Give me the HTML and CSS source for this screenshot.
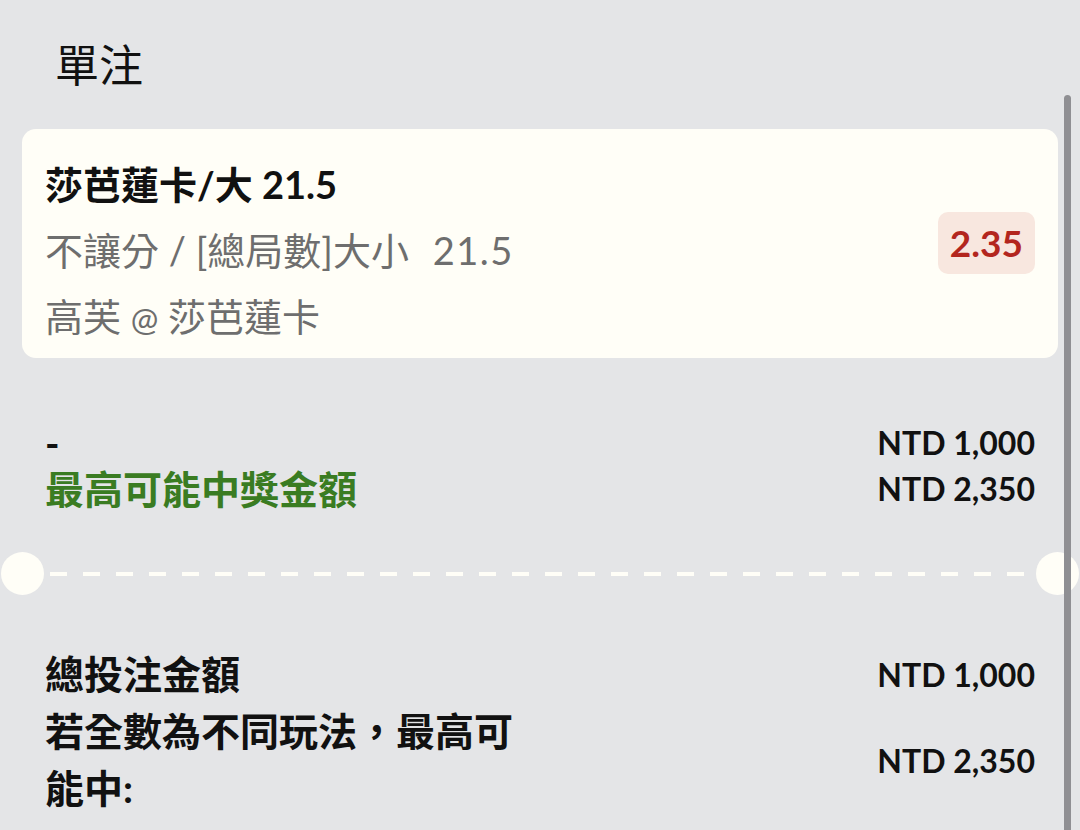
FILE: index.html
```html
<!DOCTYPE html>
<html lang="zh-Hant">
<head>
<meta charset="utf-8">
<title>單注</title>
<link rel="stylesheet" href="styles.css">
</head>
<body>
<div class="page">
  <h1 class="title">單注</h1>

  <div class="bet-card">
    <div class="bet-info">
      <div class="sel">莎芭蓮卡/大 21.5</div>
      <div class="market">不讓分 / [總局數]大小 <span class="line-val">21.5</span></div>
      <div class="match">高芙 <span class="at">@</span> 莎芭蓮卡</div>
    </div>
    <div class="odds">2.35</div>
  </div>

  <div class="stake">
    <div class="row"><span class="label">-</span><span class="amt">NTD 1,000</span></div>
    <div class="row"><span class="label green">最高可能中獎金額</span><span class="amt">NTD 2,350</span></div>
  </div>

  <div class="sep"><span class="notch left"></span><span class="dash"></span><span class="notch right"></span></div>

  <div class="totals">
    <div class="row"><span class="label">總投注金額</span><span class="amt">NTD 1,000</span></div>
    <div class="row"><span class="label wrap">若全數為不同玩法，最高可能中:</span><span class="amt">NTD 2,350</span></div>
  </div>
</div>
<div class="scrollbar"></div>
</body>
</html>
```

FILE: styles.css
```css
html, body {
  margin: 0;
  padding: 0;
  background: #e4e5e7;
  height: 100%;
  overflow: hidden;
}

body {
  font-family: "Lato", "Noto Sans CJK TC", sans-serif;
  color: #111;
}

.page {
  padding: 0 22px;
}

.title {
  margin: 0;
  padding: 33px 0 0 33px;
  font-size: 44px;
  line-height: 60px;
  font-weight: 400;
  font-family: "Noto Sans CJK TC", sans-serif;
  color: #111;
}

.bet-card {
  margin-top: 36px;
  background: #fffef7;
  border-radius: 14px;
  padding: 28px 23px 15px 23px;
  display: flex;
  align-items: center;
  justify-content: space-between;
}

.bet-info {
  display: flex;
  flex-direction: column;
  gap: 12px;
}

.bet-info div {
  font-size: 38px;
  line-height: 54px;
  height: 54px;
  white-space: nowrap;
}

.sel {
  font-weight: 700;
  color: #111;
}

.market, .match {
  color: #6e6e6e;
}

.line-val {
  margin-left: 14px;
  letter-spacing: 1.5px;
}

.at {
  font-size: 33px;
  line-height: 1;
}

.odds {
  margin-bottom: 15px;
  background: #f8e7df;
  color: #b3261e;
  border-radius: 10px;
  font-size: 37px;
  font-weight: 700;
  line-height: 44px;
  padding: 9px 12px;
}

.row {
  display: flex;
  justify-content: space-between;
  align-items: center;
}

.stake {
  margin-top: 62px;
  padding: 0 23px;
}

.stake .row {
  line-height: 46px;
}

.label {
  font-size: 39px;
  font-weight: 700;
  color: #111;
}

.label.green {
  color: #3a7c22;
}

.amt {
  font-size: 32px;
  font-weight: 700;
  color: #111;
  white-space: nowrap;
}

.sep {
  margin-top: 39px;
  height: 44px;
  display: flex;
  align-items: center;
}

.notch {
  flex: none;
  width: 43px;
  height: 43px;
  border-radius: 50%;
  background: #fffef7;
}

.notch.left { margin-left: -21px; }
.notch.right { margin-right: -21px; }

.dash {
  flex: 1;
  height: 4px;
  margin: 2px 5px 0 6px;
  background: repeating-linear-gradient(to right, #fffef7 0 17px, transparent 17px 33px);
}

.totals {
  margin-top: 51px;
  padding: 0 23px;
}

.totals .row {
  line-height: 57px;
}

.label.wrap {
  max-width: 490px;
}

.scrollbar {
  position: absolute;
  left: 1064px;
  top: 95px;
  width: 7px;
  height: 760px;
  background: #8f8f93;
  border-radius: 4px 4px 0 0;
}
```
